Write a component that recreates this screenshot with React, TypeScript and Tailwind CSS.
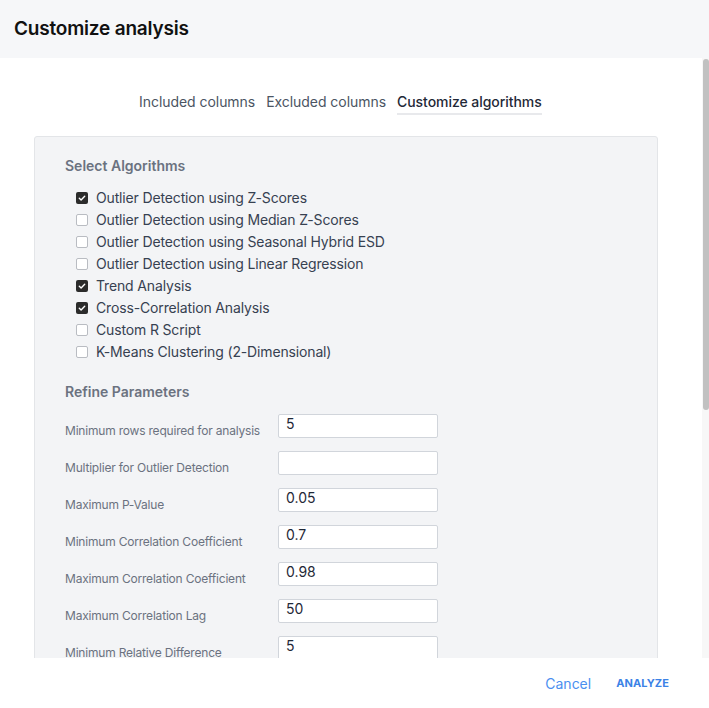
import React from "react";

const algos: [string, boolean][] = [
  ["Outlier Detection using Z-Scores", true],
  ["Outlier Detection using Median Z-Scores", false],
  ["Outlier Detection using Seasonal Hybrid ESD", false],
  ["Outlier Detection using Linear Regression", false],
  ["Trend Analysis", true],
  ["Cross-Correlation Analysis", true],
  ["Custom R Script", false],
  ["K-Means Clustering (2-Dimensional)", false],
];

const params: [string, string][] = [
  ["Minimum rows required for analysis", "5"],
  ["Multiplier for Outlier Detection", ""],
  ["Maximum P-Value", "0.05"],
  ["Minimum Correlation Coefficient", "0.7"],
  ["Maximum Correlation Coefficient", "0.98"],
  ["Maximum Correlation Lag", "50"],
  ["Minimum Relative Difference", "5"],
  ["Maximum Relative Difference", "100"],
];

function Box({ checked }: { checked: boolean }) {
  return checked ? (
    <span className="w-[12px] h-[12px] rounded-[2px] bg-[#2b2b2b] flex items-center justify-center">
      <svg width="8" height="8" viewBox="0 0 8 8">
        <path d="M1.3 4.2 L3.1 5.9 L6.7 2.2" stroke="white" strokeWidth="1.4" fill="none" strokeLinecap="round" strokeLinejoin="round" />
      </svg>
    </span>
  ) : (
    <span className="w-[12px] h-[12px] rounded-[2px] border border-[#b9bcc2] bg-white" />
  );
}

export default function App() {
  return (
    <div className="w-[709px] h-[708px] bg-white flex flex-col overflow-hidden" style={{ fontFamily: "Inter, 'Noto Sans', sans-serif" }}>
      <div className="h-[58px] shrink-0 bg-[#f6f7f9] flex items-center pl-[14px]">
        <h1 className="text-[19px] font-semibold text-[#111111] tracking-[-0.2px]">Customize analysis</h1>
      </div>
      <div className="relative h-[600px] shrink-0 overflow-hidden">
        <div className="pr-[7px]">
          <div className="flex pl-[139px] pt-[34px] gap-[11px] text-[14px] text-[#4b5563] leading-[20px] tracking-[-0.05px]">
            <span>Included columns</span>
            <span>Excluded columns</span>
            <span className="text-[#1f2937] font-medium border-b-2 border-[#e8e9ec] pb-[1px]">Customize algorithms</span>
          </div>
          <div className="mt-[21px] ml-[34px] w-[624px] bg-[#f3f4f6] border border-[#e3e5e8] rounded-[3px] pl-[30px] pt-[19px] pb-[40px]">
            <div className="text-[14px] font-semibold text-[#6b7280] leading-[20px]">Select Algorithms</div>
            <div className="mt-[11px] flex flex-col">
              {algos.map(([name, c]) => (
                <div key={name} className="h-[22px] flex items-center pl-[11px] gap-[8px]">
                  <Box checked={c} />
                  <span className="text-[14px] text-[#374151] leading-[20px] tracking-[-0.15px]">{name}</span>
                </div>
              ))}
            </div>
            <div className="mt-[19px] text-[14px] font-semibold text-[#6b7280] leading-[20px]">Refine Parameters</div>
            <div className="mt-[12px] flex flex-col gap-[13px]">
              {params.map(([label, val]) => (
                <div key={label} className="flex items-end h-[24px]">
                  <span className="w-[213px] text-[12px] text-[#6b7280] leading-[16px] tracking-[-0.2px] mb-[-1px]">{label}</span>
                  <div className="w-[160px] h-[24px] bg-white border border-[#d1d5db] rounded-[2px] pl-[7px] text-[14px] text-[#1f2937] leading-[18px]">
                    {val}
                  </div>
                </div>
              ))}
            </div>
          </div>
        </div>
        <div className="absolute right-0 top-0 w-[7px] h-full bg-[#f7f7f7]">
          <div className="mt-[1px] mx-auto w-[6px] h-[351px] rounded-full bg-[#c1c1c1]" />
        </div>
      </div>
      <div className="flex-1 flex items-center justify-end pr-[40px] gap-[25px]">
        <span className="text-[14px] text-[#4a8ff0]">Cancel</span>
        <span className="text-[11px] font-bold text-[#3b82e6] tracking-[0.1px]">ANALYZE</span>
      </div>
    </div>
  );
}
